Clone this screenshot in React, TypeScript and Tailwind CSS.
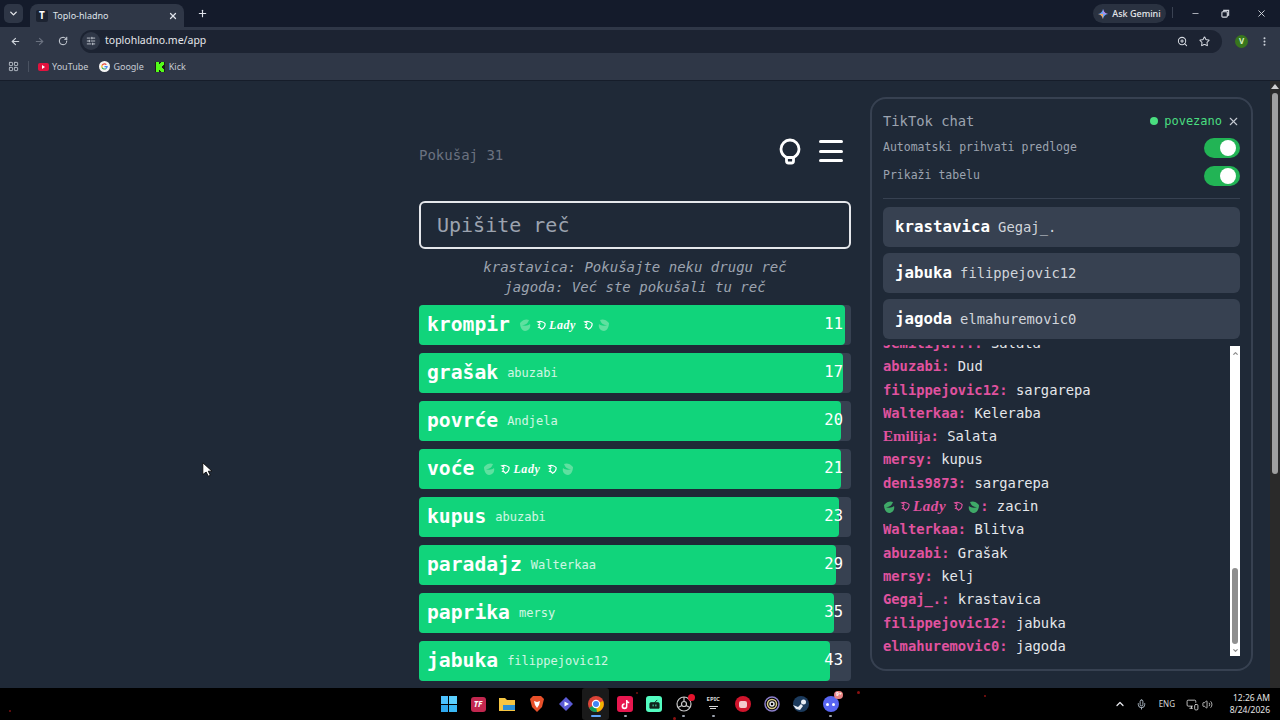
import { ArrowLeft, ArrowRight, RotateCw, ChevronDown, ChevronUp, X, Plus, Minus, ZoomIn, Star, MoreVertical, SlidersHorizontal, LayoutGrid, Mic, Volume2, MonitorSmartphone } from "lucide-react";

const guesses = [
  { word: "krompir", user: "lady", n: 11, w: 426 },
  { word: "grašak", user: "abuzabi", n: 17, w: 424 },
  { word: "povrće", user: "Andjela", n: 20, w: 422 },
  { word: "voće", user: "lady", n: 21, w: 422 },
  { word: "kupus", user: "abuzabi", n: 23, w: 420 },
  { word: "paradajz", user: "Walterkaa", n: 29, w: 417 },
  { word: "paprika", user: "mersy", n: 35, w: 415 },
  { word: "jabuka", user: "filippejovic12", n: 43, w: 411 },
];

const suggestions = [
  { word: "krastavica", user: "Gegaj_." },
  { word: "jabuka", user: "filippejovic12" },
  { word: "jagoda", user: "elmahuremovic0" },
];

const chat = [
  { name: "abuzabi", text: "Dud" },
  { name: "filippejovic12", text: "sargarepa" },
  { name: "Walterkaa", text: "Keleraba" },
  { name: "Emilija", text: "Salata", serif: true },
  { name: "mersy", text: "kupus" },
  { name: "denis9873", text: "sargarepa" },
  { name: "lady", text: "zacin" },
  { name: "Walterkaa", text: "Blitva" },
  { name: "abuzabi", text: "Grašak" },
  { name: "mersy", text: "kelj" },
  { name: "Gegaj_.", text: "krastavica" },
  { name: "filippejovic12", text: "jabuka" },
  { name: "elmahuremovic0", text: "jagoda" },
];

function Leaf({ color, flip }: { color: string; flip?: boolean }) {
  return (
    <svg viewBox="0 0 14 14" className={flip ? "h-[14px] w-[14px] -scale-x-100" : "h-[14px] w-[14px]"}>
      <path d="M1 5c3-4 7-4 9-3-1 3-3 5-7 5 2 1 6 1 8-1 1 3-1 7-5 7-3 0-5-4-5-8z" fill={color} />
    </svg>
  );
}

function Rose({ color }: { color: string }) {
  return (
    <svg viewBox="0 0 12 12" className="h-[11px] w-[11px]" fill="none" stroke={color} strokeWidth="1.3">
      <path d="M2 2c3-1 7 0 8 2 0 3-2 5-4 6-1-2-2-2-3-2 1-1 1-2 0-3 1 0 2-1 1-2z" />
    </svg>
  );
}

function LadyName({ color, leaf, size }: { color: string; leaf: string; size: string }) {
  return (
    <span className="flex items-center gap-[2px]">
      <Leaf color={leaf} />
      <span className="ml-[1px]"><Rose color={color} /></span>
      <span className={`font-['Liberation_Serif',serif] font-bold italic tracking-[0.6px] ${size}`} style={{ color }}>Lady</span>
      <span className="ml-[5px]"><Rose color={color} /></span>
      <Leaf color={leaf} flip />
    </span>
  );
}

function Toggle() {
  return (
    <div className="flex h-[20px] w-[36px] items-center justify-end rounded-full bg-[#22b455] pr-[4px]">
      <div className="h-[16px] w-[16px] rounded-full bg-white" />
    </div>
  );
}

function TabStrip() {
  return (
    <div className="flex h-[27px] items-end bg-[#141b2b] pl-[4px]">
      <div className="mb-[4px] flex h-[19px] w-[19px] items-center justify-center rounded-[5px] bg-[#2e3646]">
        <ChevronDown size={11} strokeWidth={3} className="text-[#e5e7eb]" />
      </div>
      <div className="ml-[7px] flex h-[23px] w-[154px] items-center rounded-t-[8px] bg-[#2f3747] pl-[6px] pr-[6px]">
        <div className="flex h-[12px] w-[12px] items-center justify-center rounded-[2px] bg-[#1c2331] text-[10px] font-bold text-white">T</div>
        <span className="ml-[5px] flex-1 text-[9px] text-[#dfe3ea]">Toplo-hladno</span>
        <X size={10} strokeWidth={3} className="text-[#dfe3ea]" />
      </div>
      <Plus size={11} strokeWidth={2.5} className="mb-[8px] ml-[13px] text-[#dfe3ea]" />
      <div className="flex-1" />
      <div className="mb-[4px] flex h-[19px] w-[73px] items-center justify-center gap-[4px] rounded-full bg-[#2a3241]">
        <svg viewBox="0 0 12 12" className="h-[10px] w-[10px]">
          <path d="M6 0c.5 3 2.500 5.500 6 6-3.500.5-5.500 3-6 6-.5-3-2.500-5.500-6-6 3.500-.5 5.500-3 6-6z" fill="#6ea8f5" />
          <path d="M6 0c.5 3 2.500 5.500 6 6H6z" fill="#b58ae8" />
          <path d="M0 6c3.500.5 5.500 3 6 6V6z" fill="#f0a35e" />
        </svg>
        <span className="text-[9px] font-medium text-[#e5e7eb]">Ask Gemini</span>
      </div>
      <div className="mb-[9px] ml-[6px] h-[11px] w-px bg-[#3a4252]" />
      <div className="mb-[4px] flex h-[19px] items-center text-[#d8dce3]">
        <div className="flex w-[42px] justify-center pl-[2px]"><Minus size={9} strokeWidth={2} /></div>
        <div className="flex w-[20px] justify-center">
          <svg viewBox="0 0 10 10" className="h-[9px] w-[9px]" fill="none" stroke="currentColor" strokeWidth="1.2"><rect x="1" y="3" width="6" height="6" rx="1" /><path d="M3 3V1.500h5.500V7H7" /></svg>
        </div>
        <div className="ml-[7px] flex w-[38px] justify-center"><X size={11} strokeWidth={2} /></div>
      </div>
    </div>
  );
}

function Toolbar() {
  return (
    <div className="flex h-[28px] items-center bg-[#2f3747] pl-[10px] pr-[10px]">
      <ArrowLeft size={11} strokeWidth={2.4} className="text-[#cfd4dc]" />
      <ArrowRight size={11} strokeWidth={2.4} className="ml-[13px] text-[#6b7280]" />
      <RotateCw size={10} strokeWidth={2.4} className="ml-[13px] text-[#cfd4dc]" />
      <div className="ml-[12px] flex h-[23px] flex-1 items-center rounded-full bg-[#1c2332] pl-[2px] pr-[12px]">
        <div className="flex h-[18px] w-[18px] items-center justify-center rounded-full bg-[#2f3747]">
          <SlidersHorizontal size={10} className="text-[#cfd4dc]" />
        </div>
        <span className="ml-[5px] flex-1 text-[10.5px] text-[#e5e7eb]">toplohladno.me/app</span>
        <ZoomIn size={11} strokeWidth={2.2} className="text-[#d5d9e0]" />
        <Star size={11} strokeWidth={2.2} className="ml-[11px] text-[#d5d9e0]" />
      </div>
      <div className="ml-[13px] flex h-[13px] w-[13px] items-center justify-center rounded-full bg-[#38761d] text-[8px] font-bold text-[#d8f0c8]">V</div>
      <MoreVertical size={11} strokeWidth={2.4} className="ml-[11px] text-[#cfd4dc]" />
    </div>
  );
}

function BookmarksBar() {
  return (
    <div className="flex h-[26px] items-center border-b border-[#161d2a] bg-[#2f3747] pb-[2px] pl-[8px] text-[9px] text-[#c6cbd3]">
      <LayoutGrid size={11} strokeWidth={2} className="text-[#b9bfc9]" />
      <div className="ml-[9px] h-[11px] w-px bg-[#4a5261]" />
      <div className="ml-[9px] flex h-[8px] w-[11px] items-center justify-center rounded-[2px] bg-[#e2123e]">
        <div className="h-0 w-0 border-y-[2px] border-l-[3px] border-y-transparent border-l-white" />
      </div>
      <span className="ml-[3px]">YouTube</span>
      <svg viewBox="0 0 12 12" className="ml-[11px] h-[11px] w-[11px]">
        <circle cx="6" cy="6" r="6" fill="#f4f4f4" />
        <path d="M6 2.500a3.500 3.500 0 0 1 2.500 1L7.600 4.400A2.200 2.200 0 0 0 3.900 5.300L2.800 4.400A3.500 3.500 0 0 1 6 2.500z" fill="#ea4335" />
        <path d="M2.800 4.400l1.100.9a2.200 2.200 0 0 0 0 1.400L2.800 7.600a3.500 3.500 0 0 1 0-3.200z" fill="#fbbc05" />
        <path d="M2.800 7.600l1.100-.9a2.200 2.200 0 0 0 3.100 1.100l1 .8A3.500 3.500 0 0 1 2.800 7.600z" fill="#34a853" />
        <path d="M9.500 5.400H6v1.300h2c-.2.500-.5.800-1 1.100l1 .8c1-.9 1.700-1.900 1.500-3.200z" fill="#4285f4" />
      </svg>
      <span className="ml-[3px]">Google</span>
      <div className="ml-[11px] flex h-[10px] w-[10px] items-center justify-center bg-[#1a1f16]">
        <svg viewBox="0 0 10 10" className="h-[10px] w-[10px]"><path d="M1 0h3v2h1V1h1V0h3v3H8v1H7v2h1v1h1v3H6V9H5V8H4v2H1z" fill="#53fc18" /></svg>
      </div>
      <span className="ml-[4px]">Kick</span>
    </div>
  );
}

function Game() {
  return (
    <div className="w-[432px] pt-[55px]">
      <div className="flex h-[30px] items-center justify-between pr-[8px]">
        <span className="mt-[8px] text-[14px] text-[#6b7280]">Pokušaj 31</span>
        <div className="flex items-center gap-[18px]">
          <svg viewBox="0 0 22 27" className="h-[27px] w-[22px]" fill="none" stroke="white" strokeWidth="2.800">
            <path d="M7.500 19.500C4 17.500 2 15 2 11a9 9 0 0 1 18 0c0 4-2 6.500-5.500 8.500z" />
            <path d="M7.500 20v3a2 2 0 0 0 2 2h3a2 2 0 0 0 2-2v-3" />
          </svg>
          <div className="flex w-[24px] flex-col gap-[6.500px]">
            <div className="h-[3px] rounded-full bg-white" />
            <div className="h-[3px] rounded-full bg-white" />
            <div className="h-[3px] rounded-full bg-white" />
          </div>
        </div>
      </div>
      <div className="mt-[35px] flex h-[48px] items-center rounded-[6px] border-2 border-[#e5e7eb] pl-[16px] text-[20px] text-[#9ca3af]">
        Upišite reč
      </div>
      <div className="mt-[8px] text-center text-[14px] italic leading-[20px] text-[#9ca3af]">
        <div>krastavica: Pokušajte neku drugu reč</div>
        <div>jagoda: Već ste pokušali tu reč</div>
      </div>
      <div className="mt-[8px] flex flex-col gap-[8px]">
        {guesses.map((g) => (
          <div key={g.word} className="relative h-[40px] rounded-[4px] bg-[#374151]">
            <div className="h-full rounded-[4px] bg-[#11d47b]" style={{ width: g.w }} />
            <div className="absolute inset-0 flex items-center pl-[8px] pr-[8px] text-white">
              <span className="text-[19.700px] font-bold">{g.word}</span>
              <span className="ml-[9px] text-[12px] text-white/80">
                {g.user === "lady" ? <LadyName color="#ffffff" leaf="#5fe0a0" size="text-[12px]" /> : g.user}
              </span>
              <span className="ml-auto text-[15.500px]">{g.n}</span>
            </div>
          </div>
        ))}
      </div>
    </div>
  );
}

function ChatPanel() {
  return (
    <div className="ml-[19px] mt-[16px] flex h-[574px] w-[383px] flex-col rounded-[16px] border-2 border-[#374151] pl-[11px] pr-[11px] pt-[11px]">
      <div className="flex h-[22px] items-center">
        <span className="text-[13.800px] text-[#9ca3af]">TikTok chat</span>
        <div className="ml-auto h-[8px] w-[8px] rounded-full bg-[#4ade80]" />
        <span className="ml-[6px] text-[12px] text-[#4ade80]">povezano</span>
        <X size={13} strokeWidth={2} className="ml-[5px] text-[#c6cbd3]" />
      </div>
      <div className="mt-[6px] flex h-[20px] items-center justify-between text-[11.500px] text-[#9ca3af]">
        Automatski prihvati predloge
        <Toggle />
      </div>
      <div className="mt-[8px] flex h-[20px] items-center justify-between text-[11.500px] text-[#9ca3af]">
        Prikaži tabelu
        <Toggle />
      </div>
      <div className="mt-[12px] h-px bg-[#374151]" />
      <div className="mt-[8px] flex flex-col gap-[6px]">
        {suggestions.map((s) => (
          <div key={s.word} className="flex h-[40px] items-center rounded-[6px] bg-[#374151] pl-[12px]">
            <span className="text-[15.800px] font-bold text-white">{s.word}</span>
            <span className="ml-[8px] text-[13.800px] text-[#d1d5db]">{s.user}</span>
          </div>
        ))}
      </div>
      <div className="mt-[6px] flex h-[312px] overflow-hidden">
        <div className="flex-1 text-[13.800px] leading-[23.300px] text-[#e5e7eb]">
          <div className="mt-[-13px]">
            <span className="font-bold text-[#e0529f]">Jemilija...: </span>Salata
          </div>
          {chat.map((m, i) => (
            <div key={i} className="flex h-[23.300px] items-center whitespace-pre">
              {m.name === "lady" ? (
                <LadyName color="#e0529f" leaf="#3fa968" size="text-[15px]" />
              ) : (
                <span className={m.serif ? "font-['Liberation_Serif',serif] text-[15px] font-bold text-[#e0529f]" : "font-bold text-[#e0529f]"}>{m.name}</span>
              )}
              <span className="font-bold text-[#e0529f]">: </span>
              {m.text}
            </div>
          ))}
        </div>
        <div className="mt-[1px] flex h-[310px] w-[10px] flex-col items-center bg-white pt-[4px]">
          <ChevronUp size={7} strokeWidth={4} className="text-[#8a8a8a]" />
          <div className="mt-[211px] h-[76px] w-[6px] rounded-full bg-[#8f8f8f]" />
          <ChevronDown size={7} strokeWidth={4} className="mt-[3px] text-[#8a8a8a]" />
        </div>
      </div>
    </div>
  );
}

function PageScrollbar() {
  return (
    <div className="flex w-[10px] flex-col items-center bg-[#2a2a2a] pt-[3px]">
      <div className="h-0 w-0 border-x-[4px] border-b-[5px] border-x-transparent border-b-[#d0d0d0]" />
      <div className="mt-[4px] h-[381px] w-[6px] rounded-full bg-[#9f9f9f]" />
    </div>
  );
}

function TaskIcon({ children, mark }: { children: React.ReactNode; mark?: "dot" | "bar" }) {
  return (
    <div className="relative flex h-[32px] w-[29.400px] items-center justify-center">
      {children}
      {mark === "dot" && <div className="absolute bottom-[3px] h-[2px] w-[3px] rounded-full bg-[#9ca3af]" />}
      {mark === "bar" && <div className="absolute bottom-[3px] h-[2px] w-[10px] rounded-full bg-[#60a5fa]" />}
    </div>
  );
}

function Taskbar() {
  return (
    <div className="relative flex h-[32px] items-center bg-black pl-[434px] pr-[10px] text-white">
      <TaskIcon>
        <div className="grid h-[16px] w-[16px] grid-cols-2 gap-[1px]">
          <div className="bg-[#4cc2ff]" /><div className="bg-[#5bd0ff]" /><div className="bg-[#2fa8ee]" /><div className="bg-[#3ab8f5]" />
        </div>
      </TaskIcon>
      <TaskIcon>
        <div className="flex h-[15px] w-[15px] items-center justify-center rounded-[3px] bg-[#c2274f] text-[8px] font-bold italic">TF</div>
      </TaskIcon>
      <TaskIcon>
        <svg viewBox="0 0 16 14" className="h-[14px] w-[16px]"><path d="M0 1h6l2 2h8v11H0z" fill="#f5c542" /><rect x="4" y="8" width="12" height="5" fill="#2b8fd6" /></svg>
      </TaskIcon>
      <TaskIcon>
        <svg viewBox="0 0 14 16" className="h-[16px] w-[14px]"><path d="M3 0h8l3 3-2 8-5 5-5-5-2-8z" fill="#e8502a" /><path d="M4 5l3 1 3-1-1 4-2 3-2-3z" fill="#fff" /></svg>
      </TaskIcon>
      <TaskIcon>
        <svg viewBox="0 0 16 16" className="h-[16px] w-[16px]"><path d="M8 1l7 7-7 7-7-7z" fill="#5b5bd6" /><path d="M6.500 5.500L11 8l-4.500 2.500z" fill="#fff" /></svg>
      </TaskIcon>
      <TaskIcon mark="bar">
        <div className="absolute inset-x-[1px] inset-y-0 rounded-[3px] bg-[#1a1a1a]" />
        <svg viewBox="0 0 16 16" className="relative h-[16px] w-[16px]">
          <circle cx="8" cy="8" r="8" fill="#db4437" />
          <path d="M8 8L1 12a8 8 0 0 0 8 4z" fill="#0f9d58" />
          <path d="M8 8l7-3a8 8 0 0 1-6 11z" fill="#f4b400" />
          <circle cx="8" cy="8" r="3.600" fill="#4285f4" stroke="#fff" strokeWidth="1.200" />
        </svg>
      </TaskIcon>
      <TaskIcon mark="dot">
        <div className="flex h-[16px] w-[16px] items-center justify-center rounded-[3px] bg-[#e8174f]">
          <svg viewBox="0 0 12 12" className="h-[11px] w-[11px]"><path d="M6.500 1h1.600c.1 1.200.8 1.900 2 2v1.600c-.8 0-1.400-.2-2-.6v3.800A3.200 3.200 0 1 1 5 4.700v1.700a1.500 1.500 0 1 0 1.500 1.500z" fill="#fff" /></svg>
        </div>
      </TaskIcon>
      <TaskIcon>
        <div className="flex h-[16px] w-[16px] items-center justify-center rounded-[3px] bg-[#53fcc0]">
          <svg viewBox="0 0 12 12" className="h-[11px] w-[11px]"><path d="M2 4h8a1 1 0 0 1 1 1v5H1V5a1 1 0 0 1 1-1zM6 4l3-3" fill="#10241d" stroke="#10241d" /><rect x="4" y="6" width="1" height="2" fill="#53fcc0" /><rect x="7" y="6" width="1" height="2" fill="#53fcc0" /></svg>
        </div>
      </TaskIcon>
      <TaskIcon mark="dot">
        <svg viewBox="0 0 16 16" className="h-[16px] w-[16px]" fill="none" stroke="#c8c8c8" strokeWidth="1.200"><circle cx="8" cy="8" r="7" /><circle cx="8" cy="8" r="2.500" /><path d="M8 1v4.500M2 11.500l4-2M14 11.500l-4-2" /></svg>
        <div className="absolute right-[4px] top-[6px] h-[7px] w-[7px] rounded-full bg-[#e5132d]" />
      </TaskIcon>
      <TaskIcon mark="dot">
        <div className="flex h-[16px] w-[13px] flex-col items-center text-[6px] font-bold leading-[6px] text-[#d8d8d8]">EPIC<span className="mt-[4px] h-px w-[9px] bg-[#d8d8d8]" /><span className="mt-[1px] h-px w-[6px] bg-[#d8d8d8]" /></div>
      </TaskIcon>
      <TaskIcon>
        <div className="flex h-[16px] w-[16px] items-center justify-center rounded-full bg-[#d0142c]"><div className="h-[7px] w-[8px] rounded-[2px] bg-[#f3c9cd]" /></div>
      </TaskIcon>
      <TaskIcon>
        <svg viewBox="0 0 16 16" className="h-[16px] w-[16px]" fill="none" strokeWidth="1.500"><circle cx="8" cy="8" r="7" stroke="#8b7fc9" /><circle cx="8" cy="8" r="4.500" stroke="#d6c98a" /><circle cx="8" cy="8" r="2" stroke="#e5e7eb" /></svg>
      </TaskIcon>
      <TaskIcon>
        <svg viewBox="0 0 16 16" className="h-[16px] w-[16px]"><circle cx="8" cy="8" r="8" fill="#1b3a5c" /><circle cx="10.500" cy="6" r="2.500" fill="#e8eef5" /><path d="M0 9l5 2 3-3 2 2-3 4-4-1z" fill="#e8eef5" /></svg>
      </TaskIcon>
      <TaskIcon mark="dot">
        <div className="flex h-[16px] w-[16px] items-center justify-center gap-[3px] rounded-full bg-[#5865f2]">
          <div className="h-[3px] w-[3px] rounded-full bg-white" /><div className="h-[3px] w-[3px] rounded-full bg-white" />
        </div>
        <div className="absolute right-[2px] top-[3px] flex h-[8px] w-[9px] items-center justify-center rounded-full bg-[#e78284] text-[5px] font-bold">9+</div>
      </TaskIcon>
      <div className="flex-1" />
      <ChevronUp size={12} strokeWidth={2.500} className="text-[#e5e7eb]" />
      <Mic size={11} strokeWidth={2} className="ml-[10px] text-[#b8c4d0]" />
      <span className="ml-[12px] text-[8px] text-[#d8d8d8]">ENG</span>
      <MonitorSmartphone size={13} strokeWidth={1.600} className="ml-[11px] text-[#d8d8d8]" />
      <Volume2 size={11} strokeWidth={1.800} className="ml-[3px] text-[#d8d8d8]" />
      <div className="ml-[13px] w-[44px] text-right text-[8.500px] leading-[12px] text-[#e5e5e5]">
        <div>12:26 AM</div>
        <div>8/24/2026</div>
      </div>
      <div className="absolute left-[636px] top-[4px] h-[2px] w-[2px] rounded-full bg-[#7a1010]" />
      <div className="absolute left-[673px] top-[29px] h-[3px] w-[3px] rounded-full bg-[#8a1010]" />
      <div className="absolute left-[857px] top-[3px] h-[3px] w-[3px] rounded-full bg-[#8a1010]" />
      <div className="absolute left-[984px] top-[7px] h-[2px] w-[2px] rounded-full bg-[#8a1010]" />
      <div className="absolute left-[9px] top-[22px] h-[2px] w-[2px] rounded-full bg-[#7a1010]" />
    </div>
  );
}

export default function App() {
  return (
    <div className="flex h-[720px] w-[1280px] flex-col overflow-hidden bg-[#1f2937] font-['Noto_Sans',sans-serif]">
      <TabStrip />
      <Toolbar />
      <BookmarksBar />
      <div className="relative flex h-[607px] font-['DejaVu_Sans_Mono',monospace]">
        <div className="flex flex-1 overflow-hidden pl-[419px]">
          <Game />
          <ChatPanel />
        </div>
        <PageScrollbar />
        <svg viewBox="0 0 12 18" className="absolute left-[202px] top-[381px] h-[15px] w-[10px]">
          <path d="M1 1v14l4-3 2.500 5 2.500-1-2.500-5H12z" fill="white" stroke="black" strokeWidth="1" />
        </svg>
      </div>
      <Taskbar />
    </div>
  );
}
